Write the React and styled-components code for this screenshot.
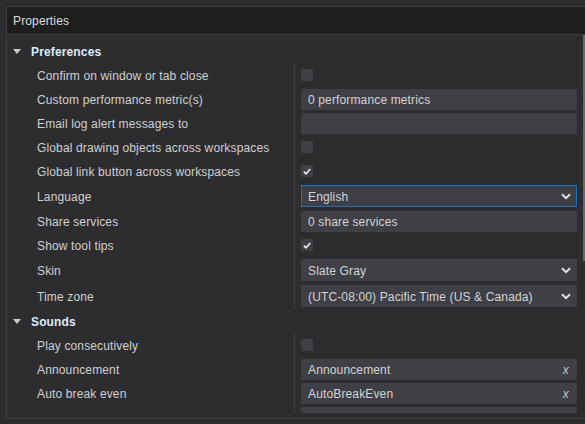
import React from 'react'
import styled, { createGlobalStyle } from 'styled-components'

const GlobalStyle = createGlobalStyle`
  body {
    margin: 0;
    background: #2d2d30;
    font-family: 'Liberation Sans', Arial, sans-serif;
    font-size: 12px;
    letter-spacing: 0.14px;
    overflow: hidden;
  }
`

const Page = styled.div`
  padding: 6px 0 0 6px;
`

const Panel = styled.div`
  position: relative;
  height: 413px;
  box-sizing: border-box;
  border: 1px solid #3f3f46;
  border-right: none;
  padding-bottom: 5px;
`

const Title = styled.div`
  height: 27px;
  line-height: 28px;
  padding-left: 6px;
  background: #1e1e1e;
  border-bottom: 1px solid #3f3f46;
  color: #dcdcdc;
`

const Body = styled.div`
  height: 378px;
  overflow: hidden;
  padding-top: 4px;
  box-sizing: border-box;
`

const Scroll = styled.div`
  position: absolute;
  right: 0;
  top: 28px;
  width: 2px;
  height: 226px;
  background: #686868;
`

const GroupHeader = styled.div`
  height: 24px;
  box-sizing: border-box;
  padding: 2px 0 0 6px;
  display: flex;
  align-items: center;
  gap: 10px;
  color: #dfe9f7;
  font-weight: bold;
`

const Triangle = styled.span`
  width: 0;
  height: 0;
  margin-top: -1px;
  border-left: 4.5px solid transparent;
  border-right: 4.5px solid transparent;
  border-top: 5px solid #c8c8c8;
`

const Row = styled.div`
  display: grid;
  grid-template-columns: 287px 1fr;
  height: ${p => (p.$tall ? 26 : 24)}px;
`

const Label = styled.div`
  display: flex;
  align-items: center;
  padding: 2px 0 0 30px;
  color: #d0d0d0;
  white-space: nowrap;
`

const Value = styled.div`
  border-left: 1px solid #3f3f46;
  padding: 0 8px 0 6px;
  display: flex;
  flex-direction: column;
  justify-content: ${p => (p.$center ? 'center' : 'flex-start')};
`

const Box = styled.div`
  margin-top: 2px;
  height: ${p => (p.$tall ? 22 : 21)}px;
  box-sizing: border-box;
  background: #3f3f46;
  border: 1px solid ${p => (p.$focus ? '#1e6fb8' : '#3f3f46')};
  display: flex;
  align-items: center;
  padding: 1px 5px 0 6px;
  color: #d4d4d4;
  white-space: nowrap;
`

const BoxText = styled.span`
  flex: 1;
`

const Check = styled.div`
  width: 12px;
  height: 12px;
  background: #3f3f46;
  display: flex;
  align-items: center;
  justify-content: center;
`

const Clear = styled.span`
  font-style: italic;
  color: #c8c8c8;
  margin-right: 2px;
`

const Chevron = () => (
  <svg width="10" height="7" viewBox="0 0 10 7">
    <path d="M1 1.2 L5 5.2 L9 1.2" fill="none" stroke="#e2e2e2" strokeWidth="2" />
  </svg>
)

const Tick = () => (
  <svg width="8" height="7" viewBox="0 0 8 7">
    <path d="M0.8 3.6 L3 5.8 L7.2 1" fill="none" stroke="#f0f0f0" strokeWidth="1.6" />
  </svg>
)

const groups = [
  {
    name: 'Preferences',
    rows: [
      { label: 'Confirm on window or tab close', type: 'check' },
      { label: 'Custom performance metric(s)', type: 'text', value: '0 performance metrics' },
      { label: 'Email log alert messages to', type: 'text', value: '' },
      { label: 'Global drawing objects across workspaces', type: 'check' },
      { label: 'Global link button across workspaces', type: 'check', checked: true },
      { label: 'Language', type: 'select', value: 'English', focus: true },
      { label: 'Share services', type: 'text', value: '0 share services' },
      { label: 'Show tool tips', type: 'check', checked: true },
      { label: 'Skin', type: 'select', value: 'Slate Gray' },
      { label: 'Time zone', type: 'select', value: '(UTC-08:00) Pacific Time (US & Canada)' }
    ]
  },
  {
    name: 'Sounds',
    rows: [
      { label: 'Play consecutively', type: 'check' },
      { label: 'Announcement', type: 'sound', value: 'Announcement' },
      { label: 'Auto break even', type: 'sound', value: 'AutoBreakEven' },
      { label: '', type: 'text', value: '' }
    ]
  }
]

const Property = ({ row }) => {
  const tall = row.type === 'select'

  if (row.type === 'check') {
    return (
      <Row>
        <Label>{row.label}</Label>
        <Value $center>
          <Check>{row.checked && <Tick />}</Check>
        </Value>
      </Row>
    )
  }

  return (
    <Row $tall={tall}>
      <Label>{row.label}</Label>
      <Value>
        <Box $tall={tall} $focus={row.focus}>
          <BoxText>{row.value}</BoxText>
          {tall && <Chevron />}
          {row.type === 'sound' && <Clear>x</Clear>}
        </Box>
      </Value>
    </Row>
  )
}

const App = () => (
  <Page>
    <GlobalStyle />
    <Panel>
      <Title>Properties</Title>
      <Body>
        {groups.map(group => (
          <div key={group.name}>
            <GroupHeader>
              <Triangle />
              {group.name}
            </GroupHeader>
            {group.rows.map((row, i) => (
              <Property key={i} row={row} />
            ))}
          </div>
        ))}
      </Body>
      <Scroll />
    </Panel>
  </Page>
)

export default App
